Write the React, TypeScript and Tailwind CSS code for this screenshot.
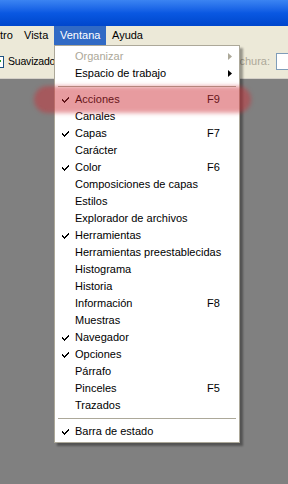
import React from "react";

type Item = { label: string; check?: boolean; key?: string; arrow?: boolean; disabled?: boolean };

const top: Item[] = [
  { label: "Organizar", arrow: true, disabled: true },
  { label: "Espacio de trabajo", arrow: true },
];

const panels: Item[] = [
  { label: "Acciones", check: true, key: "F9" },
  { label: "Canales" },
  { label: "Capas", check: true, key: "F7" },
  { label: "Carácter" },
  { label: "Color", check: true, key: "F6" },
  { label: "Composiciones de capas" },
  { label: "Estilos" },
  { label: "Explorador de archivos" },
  { label: "Herramientas", check: true },
  { label: "Herramientas preestablecidas" },
  { label: "Histograma" },
  { label: "Historia" },
  { label: "Información", key: "F8" },
  { label: "Muestras" },
  { label: "Navegador", check: true },
  { label: "Opciones", check: true },
  { label: "Párrafo" },
  { label: "Pinceles", key: "F5" },
  { label: "Trazados" },
];

const Check = () => (
  <svg width="7" height="7" viewBox="0 0 7 7" className="absolute left-[7px] top-[5px]">
    <path d="M0 3h1v1h1v1h1V4h1V3h1V2h1V1h1v2H6v1H5v1H4v1H3v1H2V6H1V5H0z" fill="#000" />
  </svg>
);

const Row = ({ it }: { it: Item }) => (
  <div className={`relative h-[17px] flex items-center ${it.disabled ? "text-[#aca899]" : "text-black"}`}>
    {it.check && <Check />}
    <span className="pl-[20px] w-[152px] whitespace-nowrap">{it.label}</span>
    {it.key && <span>{it.key}</span>}
    {it.arrow && (
      <svg width="4" height="7" viewBox="0 0 4 7" className="absolute left-[173px] top-[5px]">
        <path d="M0 0L4 3.5L0 7z" fill={it.disabled ? "#aca899" : "#000"} />
      </svg>
    )}
  </div>
);

const Sep = () => (
  <div className="h-[9px] flex items-center px-[3px]">
    <div className="w-full border-t border-[#aca899] border-b border-b-white" />
  </div>
);

export default function App() {
  return (
    <div
      className="relative w-[288px] h-[484px] overflow-hidden bg-[#808080] text-[11px]"
      style={{ fontFamily: '"Liberation Sans", Arial, sans-serif' }}
    >
      <div className="h-[26px] bg-gradient-to-b from-[#3b84f2] via-[#0a58e2] to-[#0046cc]" />
      <div className="h-[19px] bg-[#ece9d8] flex items-center text-black">
        <span className="pl-0 w-[24px]">tro</span>
        <span className="w-[30px]">Vista</span>
        <span className="h-full w-[52px] bg-[#316ac5] text-white flex items-center pl-[6px]">Ventana</span>
        <span className="pl-[6px]">Ayuda</span>
      </div>
      <div className="h-[34px] bg-[#ece9d8] flex items-center border-b border-[#d4d0c8]">
        <div className="relative w-[13px] h-[12px] ml-[-9px] border border-[#1c5180] bg-white">
          <svg width="7" height="7" viewBox="0 0 7 7" className="absolute left-[2px] top-[2px]">
            <path d="M0 3h1v1h1v1h1V4h1V3h1V2h1V1h1v2H6v1H5v1H4v1H3v1H2V6H1V5H0z" fill="#21a121" />
          </svg>
        </div>
        <span className="ml-[4px] text-[10.5px] tracking-[-0.2px]">Suavizado</span>
        <span className="ml-auto text-[#aca899] mr-[6px]">nchura:</span>
        <div className="w-[12px] h-[17px] border border-r-0 border-[#7f9db9] bg-white" />
      </div>

      <div className="absolute left-[54px] top-[45px] w-[186px] bg-white border border-[#aca899] py-[2px] shadow-[3px_3px_2px_rgba(0,0,0,0.35)]">
        {top.map((it) => <Row key={it.label} it={it} />)}
        <Sep />
        {panels.map((it) => <Row key={it.label} it={it} />)}
        <Sep />
        <Row it={{ label: "Barra de estado", check: true }} />
      </div>

      <div className="absolute left-[34px] top-[86px] w-[217px] h-[27px] rounded-full bg-[rgba(205,45,55,0.48)] blur-[2px]" />
    </div>
  );
}
